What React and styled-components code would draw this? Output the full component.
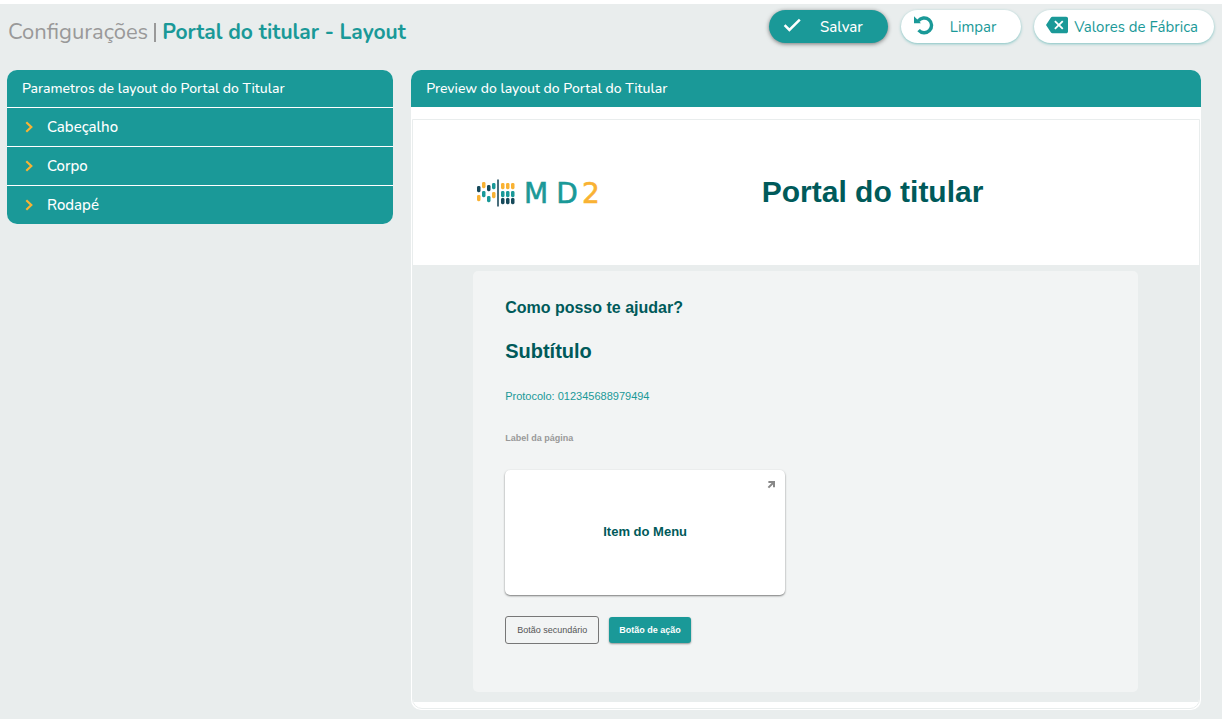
import React from 'react';
import styled, { createGlobalStyle, css } from 'styled-components';
import { MdBackspace } from 'react-icons/md';

const COLORS = {
  MAIN: '#1a9998',
  DARK: '#005a5a',
  ACCENT: '#f9b233',
  PAGE: '#e9eded',
  PANEL: '#f2f4f4',
  GRAY: '#999999',
};

const GlobalStyle = createGlobalStyle`
  * {
    box-sizing: border-box;
  }

  body {
    margin: 0;
    background: ${COLORS.PAGE};
    font-family: Nunito, Lato, sans-serif;
  }

  h1, h2, h3, p {
    margin: 0;
  }

  button {
    font-family: inherit;
    cursor: pointer;
  }
`;

const Page = styled.div`
  border-top: 4px solid #fff;
`;

const HeaderWrapper = styled.header`
  display: flex;
  justify-content: space-between;
  align-items: flex-start;
  padding: 6px 8px 0;
  height: 66px;
`;

const PageTitle = styled.h1`
  display: flex;
  align-items: center;
  gap: 6px;
  padding-top: 7px;
  font-size: 22px;
  line-height: 30px;
  font-weight: 400;
  color: ${COLORS.GRAY};
`;

const TitleDivider = styled.span`
  width: 2px;
  height: 19px;
  background: ${COLORS.GRAY};
`;

const TitleStrong = styled.span`
  font-size: 21px;
  font-weight: 700;
  color: ${COLORS.MAIN};
`;

const Actions = styled.div`
  display: flex;
  gap: 13px;
`;

const PillButton = styled.button`
  display: flex;
  align-items: center;
  gap: ${({ $wide }) => ($wide ? '16px' : '6px')};
  height: 33px;
  padding: ${({ $wide }) => ($wide ? '0 25px 0 13px' : '0 16px 0 12px')};
  border: 0;
  border-radius: 17px;
  font-size: 15px;
  line-height: 20px;
  background: #fff;
  color: ${COLORS.MAIN};
  box-shadow: 0 1px 3px rgba(26, 153, 152, 0.5);

  svg {
    margin-bottom: 4px;
  }

  ${({ $primary }) => $primary && css`
    font-weight: 500;
    background: ${COLORS.MAIN};
    color: #fff;
    box-shadow: 0 1px 4px rgba(0, 0, 0, 0.5);
  `}
`;

const Columns = styled.main`
  display: grid;
  grid-template-columns: 22fr 45fr;
  align-items: start;
  gap: 18px;
  padding: 0 21px 9px 7px;
`;

const Card = styled.section`
  border-radius: 10px;
  overflow: hidden;
  background: #fff;
`;

const CardTitle = styled.h2`
  height: 37px;
  padding: 0 15px;
  font-size: 14px;
  line-height: 37px;
  font-weight: 500;
  background: ${COLORS.MAIN};
  color: #fff;
`;

const AccordionButton = styled.button`
  display: flex;
  align-items: center;
  gap: 14px;
  width: 100%;
  height: 39px;
  padding: 0 18px;
  border: 0;
  border-top: 1px solid #fff;
  font-size: 15px;
  line-height: 20px;
  font-weight: 500;
  background: ${COLORS.MAIN};
  color: #fff;

  svg {
    width: 8px;
    height: 12px;
    color: ${COLORS.ACCENT};
  }
`;

const PreviewFrame = styled.div`
  margin: 12px 1px 1px;
  border: 1px solid ${COLORS.PAGE};
  border-radius: 0 0 10px 10px;
  overflow: hidden;
  font-family: "Liberation Sans", Arial, sans-serif;
`;

const PreviewHeader = styled.div`
  display: flex;
  align-items: center;
  height: 145px;
  padding: 0 60px;

  svg {
    width: 133px;
    height: 32px;
  }
`;

const PreviewTitle = styled.h2`
  flex: 1;
  padding-bottom: 2px;
  text-align: center;
  font-size: 30px;
  line-height: 36px;
  color: ${COLORS.DARK};
`;

const PreviewBody = styled.div`
  padding: 6px 61px 10px 60px;
  background: ${COLORS.PAGE};
`;

const PreviewFooter = styled.div`
  height: 6px;
`;

const Panel = styled.div`
  padding: 27px 32px 48px;
  border-radius: 5px;
  background: ${COLORS.PANEL};
`;

const Question = styled.h3`
  font-size: 16px;
  line-height: 20px;
  color: ${COLORS.DARK};
`;

const Subtitle = styled.h3`
  margin-top: 21px;
  font-size: 20px;
  line-height: 24px;
  color: ${COLORS.DARK};
`;

const Protocol = styled.p`
  margin-top: 26px;
  font-size: 11px;
  line-height: 14px;
  color: ${COLORS.MAIN};
`;

const PageLabel = styled.p`
  margin-top: 28px;
  font-size: 9px;
  line-height: 14px;
  font-weight: 700;
  color: ${COLORS.GRAY};
`;

const MenuItem = styled.button`
  position: relative;
  display: block;
  width: 280px;
  max-width: 100%;
  height: 125px;
  margin-top: 25px;
  padding: 0 0 2px;
  border: 0;
  border-radius: 5px;
  font-size: 13px;
  font-weight: 700;
  background: #fff;
  color: ${COLORS.DARK};
  box-shadow: 0 1px 2px rgba(0, 0, 0, 0.5);

  svg {
    position: absolute;
    top: 10px;
    right: 9px;
    width: 9px;
    height: 9px;
    color: #888;
  }
`;

const ButtonRow = styled.div`
  display: flex;
  align-items: center;
  gap: 10px;
  margin-top: 21px;
`;

const SmallButton = styled.button`
  height: 28px;
  padding: 0 11px;
  border: 1px solid #777;
  border-radius: 3px;
  font-size: 9px;
  background: transparent;
  color: #555;

  ${({ $primary }) => $primary && css`
    height: 26px;
    padding: 0 10px;
    border: 0;
    font-weight: 700;
    background: ${COLORS.MAIN};
    color: #fff;
    box-shadow: 0 1px 2px rgba(0, 0, 0, 0.4);
  `}
`;

const CheckIcon = () => (
  <svg width="22" height="22" viewBox="0 0 22 22" fill="none" aria-hidden="true">
    <path d="M2.6 11.2 7.4 16 17.8 5.6" stroke="currentColor" strokeWidth="2.5" />
  </svg>
);

const UndoIcon = () => (
  <svg width="20" height="20" viewBox="0 0 20 20" aria-hidden="true">
    <path d="M0 1.2 2 3.2 4.6 5.8 7 8.2H0Z" fill="currentColor" />
    <path d="M4.2 6A7.4 7.4 0 1 1 4.6 15.2" fill="none" stroke="currentColor" strokeWidth="3.4" />
  </svg>
);

const ChevronIcon = () => (
  <svg viewBox="0 0 8 12" fill="none" stroke="currentColor" strokeWidth="2.2" aria-hidden="true">
    <path d="M1.3 1.2 6.3 6 1.3 10.8" />
  </svg>
);

const ArrowIcon = () => (
  <svg viewBox="0 0 9 9" fill="none" stroke="currentColor" strokeWidth="2" aria-hidden="true">
    <path d="M1.4 2H7V7.2M7 2 1.4 7.6" />
  </svg>
);

// x, y, cor
const DOTS = [
  [17, 20, '#174a5b'], [17, 29, '#f9b233'],
  [22, 16, '#f9b233'], [22, 25, '#1a9998'],
  [27, 19, '#174a5b'], [27, 30, '#1a9998'],
  [32, 17, '#1a9998'], [32, 26, '#f9b233'],
  [41, 17, '#f9b233'], [46, 17, '#f9b233'], [51, 17, '#f9b233'],
  [41, 25, '#1a9998'], [46, 25, '#1a9998'], [51, 25, '#1a9998'],
  [41, 32, '#174a5b'], [46, 32, '#174a5b'], [51, 32, '#174a5b'],
];

const Logo = () => (
  <svg viewBox="13 11 133 32" role="img" aria-label="MD2">
    {DOTS.map(([x, y, color]) => (
      <rect key={`${x}-${y}`} x={x} y={y} width="3.5" height="6.2" rx="1.4" fill={color} />
    ))}
    <rect x="37" y="13.5" width="2" height="27" fill="#4a6f7c" />
    <g fontFamily="DejaVu Sans, sans-serif" fontSize="28" textAnchor="middle" strokeWidth="0.6">
      <text x="76" y="37" fill="#1a9998" stroke="#1a9998">M</text>
      <text x="107" y="37" fill="#1a9998" stroke="#1a9998">D</text>
      <text x="131" y="37" fill="#f9b233" stroke="#f9b233">2</text>
    </g>
  </svg>
);

const SECTIONS = ['Cabeçalho', 'Corpo', 'Rodapé'];

const App = () => {
  return (
    <Page>
      <GlobalStyle />
      <HeaderWrapper>
        <PageTitle>
          Configurações
          <TitleDivider />
          <TitleStrong>Portal do titular - Layout</TitleStrong>
        </PageTitle>
        <Actions>
          <PillButton type="button" $primary $wide>
            <CheckIcon />
            Salvar
          </PillButton>
          <PillButton type="button" $wide>
            <UndoIcon />
            Limpar
          </PillButton>
          <PillButton type="button">
            <MdBackspace size={22} />
            Valores de Fábrica
          </PillButton>
        </Actions>
      </HeaderWrapper>
      <Columns>
        <Card>
          <CardTitle>Parametros de layout do Portal do Titular</CardTitle>
          {SECTIONS.map(section => (
            <AccordionButton key={section} type="button" aria-expanded="false">
              <ChevronIcon />
              {section}
            </AccordionButton>
          ))}
        </Card>
        <Card>
          <CardTitle>Preview do layout do Portal do Titular</CardTitle>
          <PreviewFrame>
            <PreviewHeader>
              <Logo />
              <PreviewTitle>Portal do titular</PreviewTitle>
            </PreviewHeader>
            <PreviewBody>
              <Panel>
                <Question>Como posso te ajudar?</Question>
                <Subtitle>Subtítulo</Subtitle>
                <Protocol>Protocolo: 012345688979494</Protocol>
                <PageLabel>Label da página</PageLabel>
                <MenuItem type="button">
                  <ArrowIcon />
                  Item do Menu
                </MenuItem>
                <ButtonRow>
                  <SmallButton type="button">Botão secundário</SmallButton>
                  <SmallButton type="button" $primary>Botão de ação</SmallButton>
                </ButtonRow>
              </Panel>
            </PreviewBody>
            <PreviewFooter />
          </PreviewFrame>
        </Card>
      </Columns>
    </Page>
  );
};

export default App;
